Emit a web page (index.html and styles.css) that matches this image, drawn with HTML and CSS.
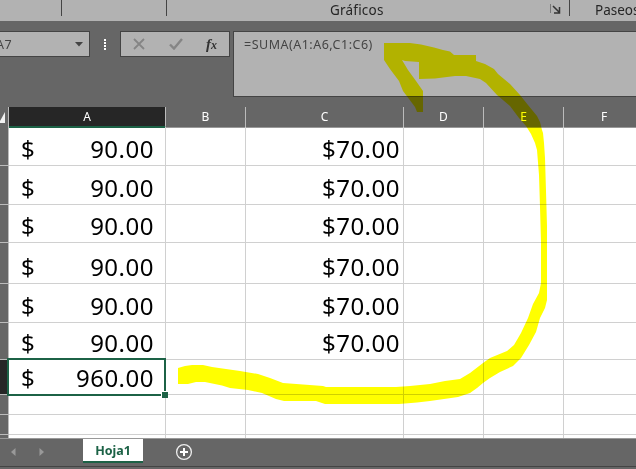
FILE: index.html
```html
<!DOCTYPE html>
<html lang="es">
<head>
<meta charset="utf-8">
<title>Hoja1</title>
<link rel="stylesheet" href="styles.css">
</head>
<body>
<div class="app">
  <header class="ribbon">
    <div class="group group-a"></div>
    <div class="group group-b"></div>
    <div class="group group-charts"><span class="charts-label">Gráficos</span>
      <svg class="launcher" width="12" height="12" viewBox="0 0 12 12"><path d="M.5 0v9" stroke="#777"/><path d="M3 2l6 6M9.5 3v6H4" fill="none" stroke="#333" stroke-width="1.5"/></svg>
    </div>
    <div class="group-tours">Paseos</div>
  </header>
  <section class="formula-bar">
    <div class="name-box"><span class="ref">A7</span><svg width="8" height="5" viewBox="0 0 8 5"><path d="M0 0h8L4 4.5z" fill="#444"/></svg></div>
    <div class="dots"><i></i><i></i><i></i><i></i></div>
    <div class="fx-box">
      <svg width="12" height="12" viewBox="0 0 12 12"><path d="M1 1l10 10M11 1L1 11" stroke="#858585" stroke-width="1.8"/></svg>
      <svg width="14" height="12" viewBox="0 0 14 12"><path d="M1 6.5l4 4L13 1" fill="none" stroke="#858585" stroke-width="2.4"/></svg>
      <span class="fx">f<small>x</small></span>
    </div>
    <div class="formula"><span>=SUMA(A1:A6,C1:C6)</span></div>
  </section>
  <main class="sheet">
    <div class="row heads"><b class="corner"><svg width="5" height="11" viewBox="0 0 5 11"><path d="M5 0v11H0V9z" fill="#f2f2f2"/></svg></b><b class="on">A</b><b>B</b><b>C</b><b>D</b><b>E</b><b>F</b></div>
    <div class="row h39"><b></b><span class="acc"><i>$</i>90.00</span><span></span><span class="num">$70.00</span><span></span><span></span><span></span></div>
    <div class="row h39"><b></b><span class="acc"><i>$</i>90.00</span><span></span><span class="num">$70.00</span><span></span><span></span><span></span></div>
    <div class="row h38"><b></b><span class="acc"><i>$</i>90.00</span><span></span><span class="num">$70.00</span><span></span><span></span><span></span></div>
    <div class="row h41"><b></b><span class="acc"><i>$</i>90.00</span><span></span><span class="num">$70.00</span><span></span><span></span><span></span></div>
    <div class="row h39"><b></b><span class="acc"><i>$</i>90.00</span><span></span><span class="num">$70.00</span><span></span><span></span><span></span></div>
    <div class="row h37"><b></b><span class="acc"><i>$</i>90.00</span><span></span><span class="num">$70.00</span><span></span><span></span><span></span></div>
    <div class="row h35"><b class="on"></b><span class="acc selected"><i>$</i>960.00</span><span></span><span></span><span></span><span></span><span></span></div>
    <div class="row h20"><b></b><span></span><span></span><span></span><span></span><span></span><span></span></div>
    <div class="row h20"><b></b><span></span><span></span><span></span><span></span><span></span><span></span></div>
    <div class="row h3"><b></b><span></span><span></span><span></span><span></span><span></span><span></span></div>
  </main>
  <footer class="tabs">
    <div class="nav">
      <svg width="5" height="8" viewBox="0 0 5 8"><path d="M4.5 0v8L0 4z" fill="#999"/></svg>
      <svg width="5" height="8" viewBox="0 0 5 8"><path d="M.5 0v8L5 4z" fill="#999"/></svg>
    </div>
    <div class="tab">Hoja1</div>
    <svg class="add" width="18" height="18" viewBox="0 0 18 18"><circle cx="9" cy="9" r="7.4" fill="none" stroke="#eee" stroke-width="1.3"/><path d="M9 5v8M5 9h8" stroke="#fff" stroke-width="2"/></svg>
  </footer>
  <svg class="marker" width="636" height="469" viewBox="0 0 636 469"><path fill="#ff0" d="M384 43H410L421 44.5 434 47.5 443 50 450 51.5 454 55H476V61L485 64 494 69 498 74 510 84 520 95 528 105 537 116 540 122 542 130 543 133 544 143 545 158 546 191 547 226V300L545 308 540 318 536 332 529 345 521 358 513 366 500 372 490 378 483 383 477 388 470 393 458 397 430 401 417 402.5 399 404H325L316 401H284L276 399 262 393 248 390 230 388 222 385.500 205 382H196L188 384H178V368L185 366 192 365H203L212 367 240 371 258 374 270 378 283 383 303 384.500 323 386 326 387H396L410 386 430 384 445 381 460 379 470 373 483 363 490 358 507 351 514 345 521 333 528 318 533 304 539 293 541 283V242L540 207 539 175 537 150 535 143 531 134 526 126 519 118 510 106 497 95 486 83 480 79 466 76H455L435 78.500 419 79V62L405 61 402 60 408 70 416 81 423 91V112H417L415 107 403 91 399 81 390 69 384 60Z"/></svg>
</div>
</body>
</html>
```
FILE: styles.css
```css
* { box-sizing: border-box; }
body { margin: 0; }
.app {
  position: relative;
  width: 636px;
  height: 469px;
  overflow: hidden;
  background: #666;
  font-family: "Noto Sans", "Open Sans", sans-serif;
}
svg { display: block; flex: none; }
i { font-style: normal; }

.ribbon {
  display: flex;
  height: 21px;
  background: #b2b2b2;
  color: #262626;
  font-size: 13.5px;
  line-height: 20px;
}
.group { flex: none; height: 16px; border-right: 1px solid #444; }
.group-a { width: 62px; }
.group-b { width: 105px; }
.group-charts { width: 403px; display: flex; padding-left: 163px; }
.charts-label { width: 220px; letter-spacing: 0.2px; }
.launcher { margin-top: 4px; }
.group-tours { padding-left: 25px; white-space: nowrap; }

.formula-bar { display: flex; height: 86px; padding-top: 10px; }
.name-box, .fx-box, .formula {
  background: #b2b2b2;
  border: 1px solid #444;
  color: #444;
  font-size: 12.5px;
}
.name-box {
  width: 90px;
  height: 26px;
  border-left: 0;
  display: flex;
  justify-content: space-between;
  align-items: center;
  padding-right: 6px;
}
.ref { margin-left: -4px; letter-spacing: 0.5px; }
.dots { width: 30px; padding: 8px 0 0 14px; display: grid; gap: 1px; align-content: start; }
.dots i { width: 2px; height: 2px; background: #fff; }
.fx-box {
  width: 110px;
  height: 26px;
  margin-right: 3px;
  padding: 0 12px 0 12px;
  display: flex;
  align-items: center;
  justify-content: space-between;
}
.fx { font: italic bold 15px/20px "Liberation Serif", serif; color: #333; }
.fx small { font-size: 12px; }
.formula { width: 403px; height: 66px; border-right: 0; padding: 4px 0 0 10px; line-height: 18px; letter-spacing: 0.5px; }

.row {
  display: grid;
  grid-template-columns: 9px 157px 80px 158px 80px 80px 80px;
  background: #fff;
}
.row b { background: #666; border-right: 1px solid #bbb; border-bottom: 1px solid #bbb; }
.row span { border-right: 1px solid #d0d0d0; border-bottom: 1px solid #d0d0d0; }
.row > :last-child { border-right: 0; }
.heads { height: 20px; color: #fff; font-size: 12px; line-height: 19px; text-align: center; }
.heads b { font-weight: 400; border-bottom-color: #999; }
.heads .on { border-bottom: 2px solid #1c6246; }
.row b.on { background: #262626; }
.corner { display: flex; align-items: center; }
.h39 { height: 39px; }
.h38 { height: 38px; }
.h41 { height: 41px; }
.h37 { height: 37px; }
.h35 { height: 35px; }
.h20 { height: 20px; }
.h3 { height: 3px; }
.h3 span, .h3 b { border-bottom: 0; }
.acc, .num {
  display: flex;
  align-items: flex-end;
  font-size: 24px;
  line-height: 33px;
  letter-spacing: 0.5px;
  color: #000;
}
.acc { justify-content: space-between; padding: 0 11px 0 12px; }
.num { justify-content: flex-end; padding-right: 3px; }
.selected { position: relative; }
.selected::before {
  content: "";
  position: absolute;
  inset: -2px -1px -2px -2px;
  border: 2px solid #1c6246;
}
.selected::after {
  content: "";
  position: absolute;
  right: -3px;
  bottom: -4px;
  width: 6px;
  height: 6px;
  background: #1c6246;
  border: solid #fff;
  border-width: 1px 0 0 1px;
}

.tabs {
  display: flex;
  height: 29px;
  border-top: 1px solid #999;
  border-bottom: 1px solid #444;
}
.nav { width: 83px; display: flex; gap: 23px; padding: 9px 0 0 11px; }
.tab {
  width: 60px;
  height: 24px;
  background: #fff;
  border-bottom: 2px solid #1c6246;
  color: #1c6246;
  font-size: 12.5px;
  font-weight: 700;
  line-height: 24px;
  text-align: center;
}
.add { margin: 4px 0 0 32px; }
.marker { position: absolute; inset: 0; mix-blend-mode: multiply; pointer-events: none; }
```
